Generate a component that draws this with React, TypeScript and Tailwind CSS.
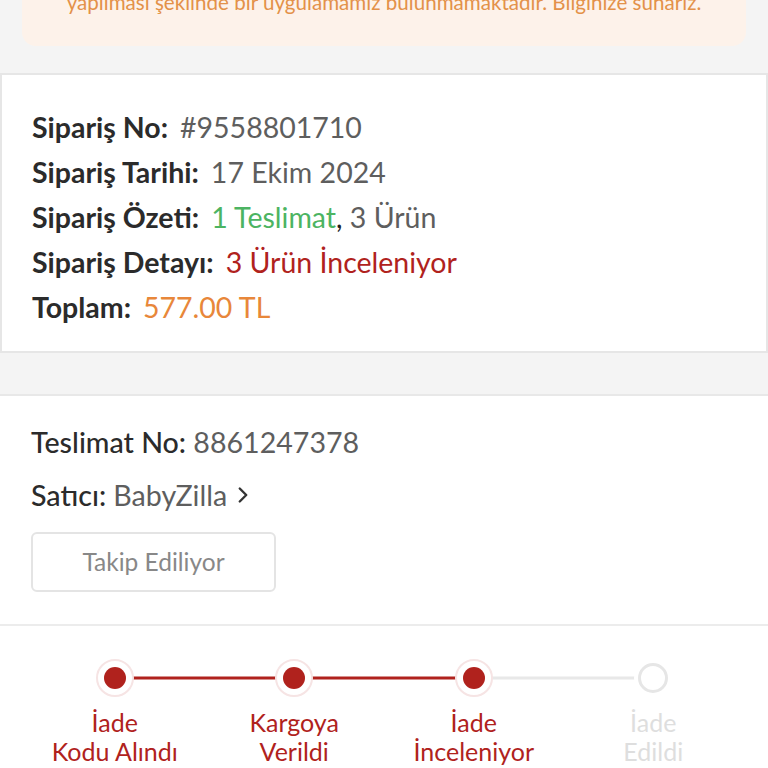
import { ChevronRight } from 'lucide-react';

const STEPS = [
  { top: 'İade', bottom: 'Kodu Alındı', done: true },
  { top: 'Kargoya', bottom: 'Verildi', done: true },
  { top: 'İade', bottom: 'İnceleniyor', done: true },
  { top: 'İade', bottom: 'Edildi', done: false },
];

export default function App() {
  return (
    <div className="flex w-[768px] h-[768px] flex-col overflow-hidden bg-[#f4f4f4] font-['Lato','Noto_Sans',sans-serif]">
      {/* bilgilendirme kutusu (üst kısmı kaydırılmış) */}
      <div className="px-[22px] -mt-[40px]">
        <div className="rounded-[14px] bg-[#fdf2ea] pt-[28px] pb-[30px] text-center text-[20.6px] leading-[28px] text-[#e39149]">
          yapılması şeklinde bir uygulamamız bulunmamaktadır. Bilginize sunarız.
        </div>
      </div>

      {/* sipariş özeti */}
      <div className="mt-[27px] bg-white border-2 border-[#e6e6e6] px-[30px] pt-[30px] pb-[21px] text-[28.5px] leading-[45px]">
        <Row label="Sipariş No:">
          <span className="text-[#5e5e5e]">#9558801710</span>
        </Row>
        <Row label="Sipariş Tarihi:">
          <span className="text-[#5e5e5e]">17 Ekim 2024</span>
        </Row>
        <Row label="Sipariş Özeti:">
          <span className="text-[#4cb462]">1 Teslimat</span>
          <span className="text-[#222]">,</span>
          <span className="text-[#5e5e5e]"> 3 Ürün</span>
        </Row>
        <Row label="Sipariş Detayı:">
          <span className="text-[#b0221d]">3 Ürün İnceleniyor</span>
        </Row>
        <Row label="Toplam:">
          <span className="text-[#e8873a]">577.00 TL</span>
        </Row>
      </div>

      {/* teslimat */}
      <div className="mt-[41px] bg-white border-t-2 border-[#e8e8e8] px-[31px] pt-[26px] pb-[32px]">
        <p className="text-[28.6px] leading-[40px] text-[#5e5e5e]">
          <span className="font-medium text-[#2b2b2b]">Teslimat No: </span>8861247378
        </p>
        <p className="mt-[13px] flex items-center text-[28.6px] leading-[40px] text-[#5e5e5e]">
          <span className="font-medium text-[#2b2b2b]">Satıcı:&nbsp;</span>BabyZilla
          <ChevronRight className="ml-[3px] h-[26px] w-[26px] text-[#333]" strokeWidth={2.2} />
        </p>
        <div className="mt-[17px] flex h-[60px] w-[245px] items-center justify-center rounded-[6px] border-2 border-[#e4e4e4] text-[24.5px] text-[#888]">
          Takip Ediliyor
        </div>
      </div>

      {/* iade adımları */}
      <div className="flex-1 border-t-2 border-[#ececec] bg-white px-[25px] pt-[24px]">
        <div className="grid grid-cols-4">
          {STEPS.map((s, i) => {
            const next = STEPS[i + 1];
            return (
              <div key={i} className="flex flex-col items-center">
                <div className="relative flex h-[56px] w-full items-center justify-center">
                  {next && (
                    <div
                      className={`absolute left-1/2 top-1/2 h-[3px] w-full -translate-y-1/2 ${
                        next.done ? 'bg-[#b0221d]' : 'bg-[#e8e8e8]'
                      }`}
                    />
                  )}
                  {s.done ? (
                    <div className="relative z-10 flex h-[38px] w-[38px] items-center justify-center rounded-full border-2 border-[#f6e4e4] bg-white">
                      <div className="h-[22px] w-[22px] rounded-full bg-[#b0221d]" />
                    </div>
                  ) : (
                    <div className="relative z-10 flex h-[38px] w-[38px] items-center justify-center rounded-full bg-white">
                      <div className="h-[30px] w-[30px] rounded-full border-[3px] border-[#e6e6e6] bg-white" />
                    </div>
                  )}
                </div>
                <div
                  className={`mt-[2px] text-center text-[25px] leading-[29px] ${
                    s.done ? 'text-[#b0221d]' : 'text-[#dedede]'
                  }`}
                >
                  <div>{s.top}</div>
                  <div>{s.bottom}</div>
                </div>
              </div>
            );
          })}
        </div>
      </div>
    </div>
  );
}

function Row({ label, children }: { label: string; children: React.ReactNode }) {
  return (
    <p className="whitespace-nowrap">
      <span className="font-bold text-[#2b2b2b]">{label}</span>
      <span className="ml-[12px]">{children}</span>
    </p>
  );
}
